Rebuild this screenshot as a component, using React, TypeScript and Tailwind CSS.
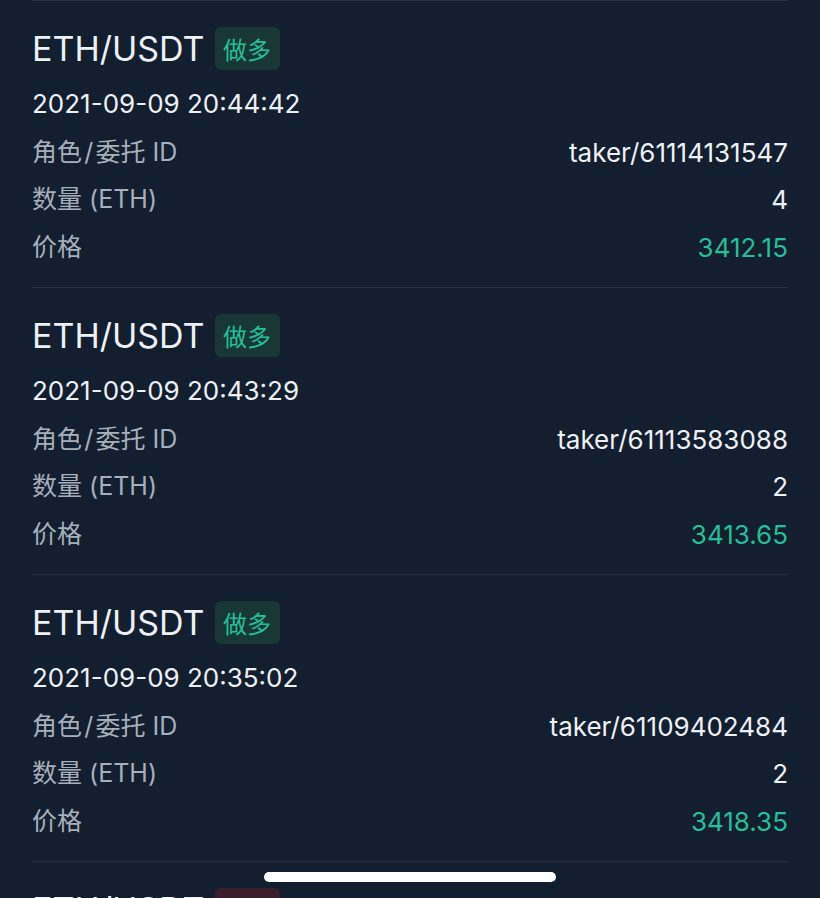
import React from 'react';

type Trade = {
  pair: string;
  side: 'long' | 'short';
  time: string;
  orderId: string;
  amount: string;
  price: string;
};

const trades: Trade[] = [
  { pair: 'ETH/USDT', side: 'long', time: '2021-09-09 20:44:42', orderId: 'taker/61114131547', amount: '4', price: '3412.15' },
  { pair: 'ETH/USDT', side: 'long', time: '2021-09-09 20:43:29', orderId: 'taker/61113583088', amount: '2', price: '3413.65' },
  { pair: 'ETH/USDT', side: 'long', time: '2021-09-09 20:35:02', orderId: 'taker/61109402484', amount: '2', price: '3418.35' },
  { pair: 'ETH/USDT', side: 'short', time: '2021-09-09 20:30:11', orderId: 'taker/61106772930', amount: '2', price: '3420.80' },
];

const font = "font-['Inter','Noto_Sans_CJK_SC',sans-serif]";

const TradeCard: React.FC<{ trade: Trade }> = ({ trade }) => {
  const isLong = trade.side === 'long';
  return (
    <div className="border-t border-[#253143] pt-[26px] pb-[16px]">
      <div className="flex items-center gap-[10px] h-[43px]">
        <span className="text-[34px] text-[#eef0f4]">{trade.pair}</span>
        <span
          className={`h-[43px] w-[65px] flex items-center justify-center rounded-[6px] text-[24px] font-['Noto_Sans_CJK_SC',sans-serif] ${
            isLong ? 'bg-[#183835] text-[#25bf98]' : 'bg-[#3a1e2c] text-[#e0475e]'
          }`}
        >
          {isLong ? '做多' : '做空'}
        </span>
      </div>
      <div className="mt-[17px] h-[34px] leading-[34px] text-[26px] text-[#eef0f4]">{trade.time}</div>
      <div className="mt-[7.5px] text-[25px]">
        <div className="flex justify-between items-center h-[47.5px]">
          <span className="text-[#a7afbb]">{'角色\u200A/\u200A委托 ID'}</span>
          <span className="text-[26px] text-[#eef0f4]">{trade.orderId}</span>
        </div>
        <div className="flex justify-between items-center h-[47.5px]">
          <span className="text-[#a7afbb]">数量 (ETH)</span>
          <span className="text-[26px] text-[#eef0f4]">{trade.amount}</span>
        </div>
        <div className="flex justify-between items-center h-[47.5px]">
          <span className="text-[#a7afbb]">价格</span>
          <span className="text-[26px] text-[#25bf98]">{trade.price}</span>
        </div>
      </div>
    </div>
  );
};

const App: React.FC = () => {
  return (
    <div className={`relative w-[820px] h-[898px] overflow-hidden bg-[#131e2f] ${font}`}>
      <div className="px-8">
        {trades.map((t, i) => (
          <TradeCard key={i} trade={t} />
        ))}
      </div>
      <div className="absolute left-[264px] top-[872px] w-[292px] h-[10px] rounded-full bg-white" />
    </div>
  );
};

export default App;
